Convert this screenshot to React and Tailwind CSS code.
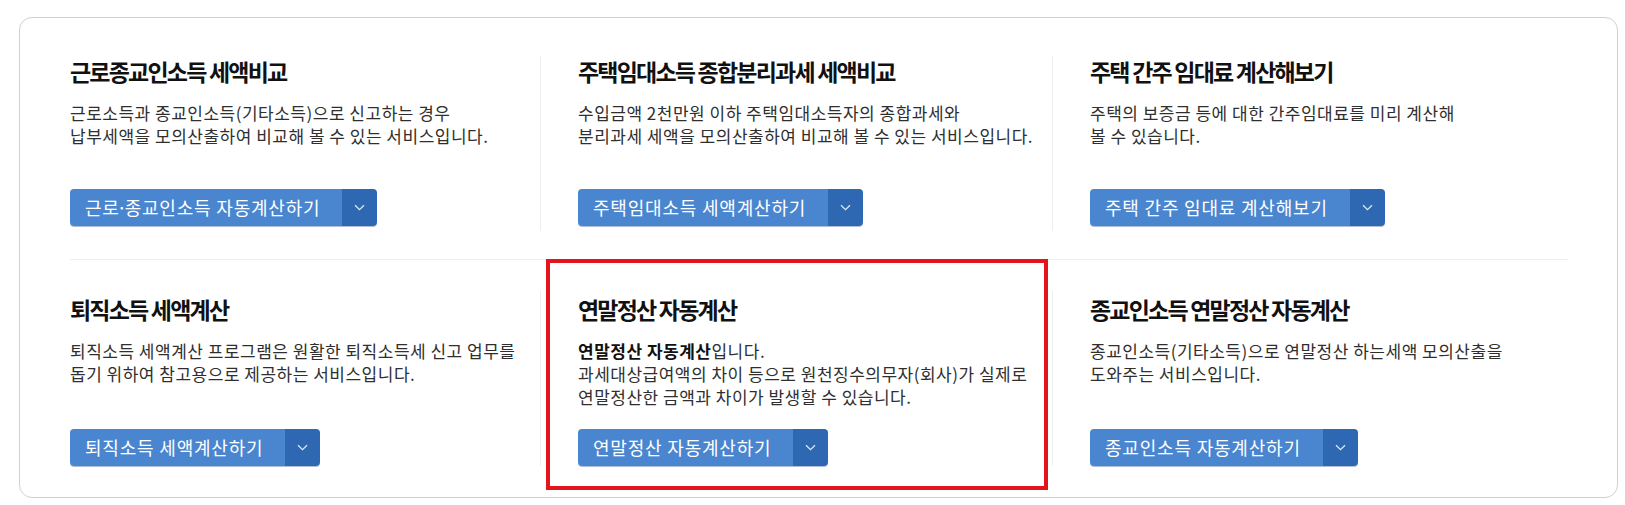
const rows = [
  [
    {
      title: "근로종교인소득 세액비교",
      desc: ["근로소득과 종교인소득(기타소득)으로 신고하는 경우", "납부세액을 모의산출하여 비교해 볼 수 있는 서비스입니다."],
      button: "근로·종교인소득 자동계산하기",
    },
    {
      title: "주택임대소득 종합분리과세 세액비교",
      desc: ["수입금액 2천만원 이하 주택임대소득자의 종합과세와", "분리과세 세액을 모의산출하여 비교해 볼 수 있는 서비스입니다."],
      button: "주택임대소득 세액계산하기",
    },
    {
      title: "주택 간주 임대료 계산해보기",
      desc: ["주택의 보증금 등에 대한 간주임대료를 미리 계산해", "볼 수 있습니다."],
      button: "주택 간주 임대료 계산해보기",
    },
  ],
  [
    {
      title: "퇴직소득 세액계산",
      desc: ["퇴직소득 세액계산 프로그램은 원활한 퇴직소득세 신고 업무를", "돕기 위하여 참고용으로 제공하는 서비스입니다."],
      button: "퇴직소득 세액계산하기",
    },
    {
      title: "연말정산 자동계산",
      lead: "연말정산 자동계산",
      desc: ["입니다.", "과세대상급여액의 차이 등으로 원천징수의무자(회사)가 실제로", "연말정산한 금액과 차이가 발생할 수 있습니다."],
      button: "연말정산 자동계산하기",
      marked: true,
    },
    {
      title: "종교인소득 연말정산 자동계산",
      desc: ["종교인소득(기타소득)으로 연말정산 하는세액 모의산출을", "도와주는 서비스입니다."],
      button: "종교인소득 자동계산하기",
    },
  ],
];

// the middle dot in Noto CJK is full width, the original sits tighter
const Label = ({ text }) => {
  const parts = text.split("·");
  return parts.map((p, i) => (
    <span key={i}>
      {i > 0 && <span className="mx-[-3px]">·</span>}
      {p}
    </span>
  ));
};

const SplitButton = ({ label }) => (
  <div className="mt-auto inline-flex h-[37px] self-start overflow-hidden rounded-[4px] shadow-[0_1px_0_rgba(30,70,130,0.35)]">
    <span className="bg-[#4a86cf] pl-[15px] pr-[22px] text-[18px] leading-[37px] tracking-[0.8px] text-white">
      <Label text={label} />
    </span>
    <span className="flex w-[35px] items-center justify-center bg-[#2f68b2]">
      <svg width="11" height="7" viewBox="0 0 11 7" fill="none">
        <path d="M1 1.2 5.5 5.6 10 1.2" stroke="#dfe8f5" strokeWidth="1.3" />
      </svg>
    </span>
  </div>
);

const Cell = ({ item, index, second }) => (
  <div
    className={
      "relative flex flex-col " +
      (second ? "mt-[31px] h-[175px] pt-[3px] " : "h-[175px] pb-[5px] ") +
      (index > 0 ? "border-l border-[#eeeeee] pl-[37px]" : "")
    }
  >
    <h3 className="text-[23px] font-bold leading-[30px] tracking-[-1.8px] text-[#111]">{item.title}</h3>
    <p className="mt-[15px] text-[17px] leading-[23px] tracking-[0.5px] text-[#2f2f2f]">
      {item.lead && <b className="font-bold text-[#111]">{item.lead}</b>}
      {item.desc.map((line, i) => (
        <span key={i}>
          {i > 0 && <br />}
          {line}
        </span>
      ))}
    </p>
    <SplitButton label={item.button} />
    {item.marked && (
      <div className="pointer-events-none absolute -top-[32px] left-[5px] right-[4px] -bottom-[24px] border-[4px] border-[#e3141c]" />
    )}
  </div>
);

export default function App() {
  return (
    <div className="min-h-screen bg-white pl-[19px] pr-[7px] pt-[17px] font-['Noto_Sans_CJK_KR','Noto_Sans',sans-serif]">
      <div className="h-[481px] rounded-[13px] border border-[#cdd1d6] pl-[50px] pt-[38px]">
        <div className="grid grid-cols-[470px_512px_512px]">
          {rows[0].map((item, i) => (
            <Cell key={i} item={item} index={i} />
          ))}
        </div>
        <div className="mt-[28px] h-px w-[1498px] bg-[#eeeeee]" />
        <div className="grid grid-cols-[470px_512px_512px]">
          {rows[1].map((item, i) => (
            <Cell key={i} item={item} index={i} second />
          ))}
        </div>
      </div>
    </div>
  );
}
